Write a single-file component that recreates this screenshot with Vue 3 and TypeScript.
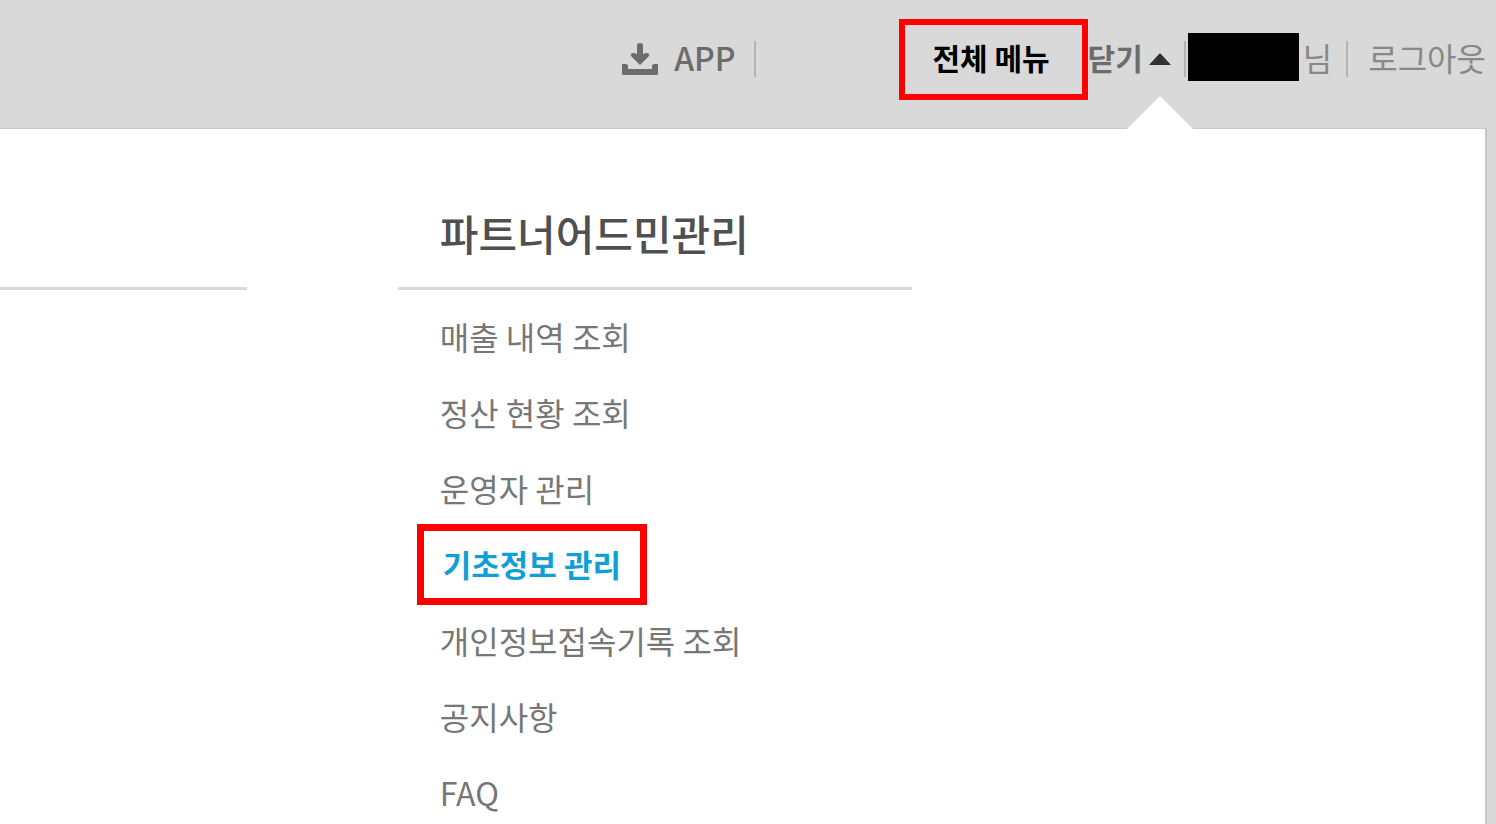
<script setup lang="ts">
interface MenuItem {
  label: string
  active?: boolean
}

const menuTitle = '파트너어드민관리'

const menuItems: MenuItem[] = [
  { label: '매출 내역 조회' },
  { label: '정산 현황 조회' },
  { label: '운영자 관리' },
  { label: '기초정보 관리', active: true },
  { label: '개인정보접속기록 조회' },
  { label: '공지사항' },
  { label: 'FAQ' },
]
</script>

<template>
  <div class="page">
    <header class="topbar">
      <a class="app-link" href="#app-download">
        <svg class="download" viewBox="0 0 36 34" aria-hidden="true">
          <path d="M15 3q0-2 3-2t3 2v9l3-1q4 0 3 3l-9 9-9-9q-1-3 3-3l3 1z" />
          <path d="M1 22h3q2 0 2 2v3h24v-3q0-2 2-2h3q1 0 1 1v9q0 1-1 1H1q-1 0-1-1v-9q0-1 1-1z" />
        </svg>
        <span class="label">APP</span>
      </a>
      <span class="bar"></span>
      <button class="all-menu" type="button">전체 메뉴</button>
      <button class="close" type="button">
        <span class="label">닫기</span>
        <span class="marker">
          <svg class="caret" viewBox="0 0 22 12" aria-hidden="true">
            <path d="M11 0 22 12H0z" />
          </svg>
          <svg class="notch" viewBox="0 0 68 34" aria-hidden="true">
            <path d="M34 0 68 34H0z" />
          </svg>
        </span>
      </button>
      <span class="bar user-bar"></span>
      <span class="user label"><span class="user-name"></span>님</span>
      <span class="bar"></span>
      <a class="logout label" href="#logout">로그아웃</a>
    </header>

    <main class="panel">
      <section class="column">
        <div class="heading"></div>
      </section>
      <nav class="column" aria-labelledby="menu-title">
        <h2 id="menu-title" class="heading">{{ menuTitle }}</h2>
        <ul class="list">
          <li v-for="item in menuItems" :key="item.label">
            <a href="#menu" :class="['item', { active: item.active }]">{{ item.label }}</a>
          </li>
        </ul>
      </nav>
    </main>
  </div>
</template>

<style>
body {
  margin: 0;
  background: #d9d9d9;
}
</style>

<style scoped>
.page {
  box-sizing: border-box;
  display: flex;
  flex-direction: column;
  min-height: 100vh;
  background: #d9d9d9;
  color: #777;
  font-family: "Noto Sans CJK KR", "Noto Sans", sans-serif;
  font-size: 32px;
  line-height: 44px;
}

a {
  color: inherit;
  text-decoration: none;
  white-space: nowrap;
}

button {
  margin: 0;
  background: none;
  font: inherit;
  font-size: 30px;
  white-space: nowrap;
  cursor: pointer;
}

.topbar {
  box-sizing: border-box;
  display: flex;
  align-items: center;
  justify-content: flex-end;
  height: 128px;
  padding: 0 10px 10px 0;
}

.label {
  padding-bottom: 4px;
}

.app-link {
  display: flex;
  align-items: center;
  gap: 16px;
  margin-right: 18px;
  color: #6c6c6c;
  font-weight: 500;
}

.download {
  width: 36px;
  height: 34px;
  fill: #6c6c6c;
}

.bar {
  width: 2px;
  height: 36px;
  background: #b4b4b4;
}

.all-menu {
  box-sizing: border-box;
  height: 81px;
  width: 189px;
  margin-left: 143px;
  padding: 0 4px 4px 0;
  border: 6px solid #f00;
  color: #000;
  font-weight: 700;
}

.close {
  display: flex;
  align-items: center;
  gap: 6px;
  padding: 0;
  border: 0;
  color: #6c6c6c;
  font-weight: 700;
}

.marker {
  position: relative;
  display: flex;
}

.caret {
  width: 22px;
  height: 12px;
  fill: #333;
}

.notch {
  position: absolute;
  top: 43px;
  left: -23px;
  width: 68px;
  height: 34px;
  fill: #fff;
}

.user-bar {
  margin-left: 13px;
}

.user {
  display: flex;
  align-items: center;
  gap: 4px;
  margin: 0 14px 0 2px;
  color: #888;
}

.user-name {
  width: 111px;
  height: 48px;
  background: #000;
}

.logout {
  margin-left: 20px;
  color: #888;
}

.panel {
  flex: 1;
  display: grid;
  grid-template-columns: 247fr 515fr 422fr;
  column-gap: 151px;
  margin-right: 9px;
  padding: 74px 0 8px;
  border: solid #c8c8c8;
  border-width: 1px 2px 0 0;
  background: #fff;
}

.heading {
  height: 60px;
  margin: 0;
  padding: 0 0 24px 42px;
  border-bottom: 3px solid #d8d8d8;
  color: #505050;
  font-size: 42px;
  font-weight: 500;
  line-height: 60px;
  white-space: nowrap;
}

.list {
  display: flex;
  flex-direction: column;
  gap: 32px;
  margin: 0;
  padding: 24px 0 0 42px;
  list-style: none;
}

.list li {
  display: flex;
}

.active {
  margin: -18px -23px -19px;
  padding: 11px 19px 12px;
  border: 7px solid #f00;
  color: #129fd6;
  font-size: 31px;
  font-weight: 700;
}
</style>
